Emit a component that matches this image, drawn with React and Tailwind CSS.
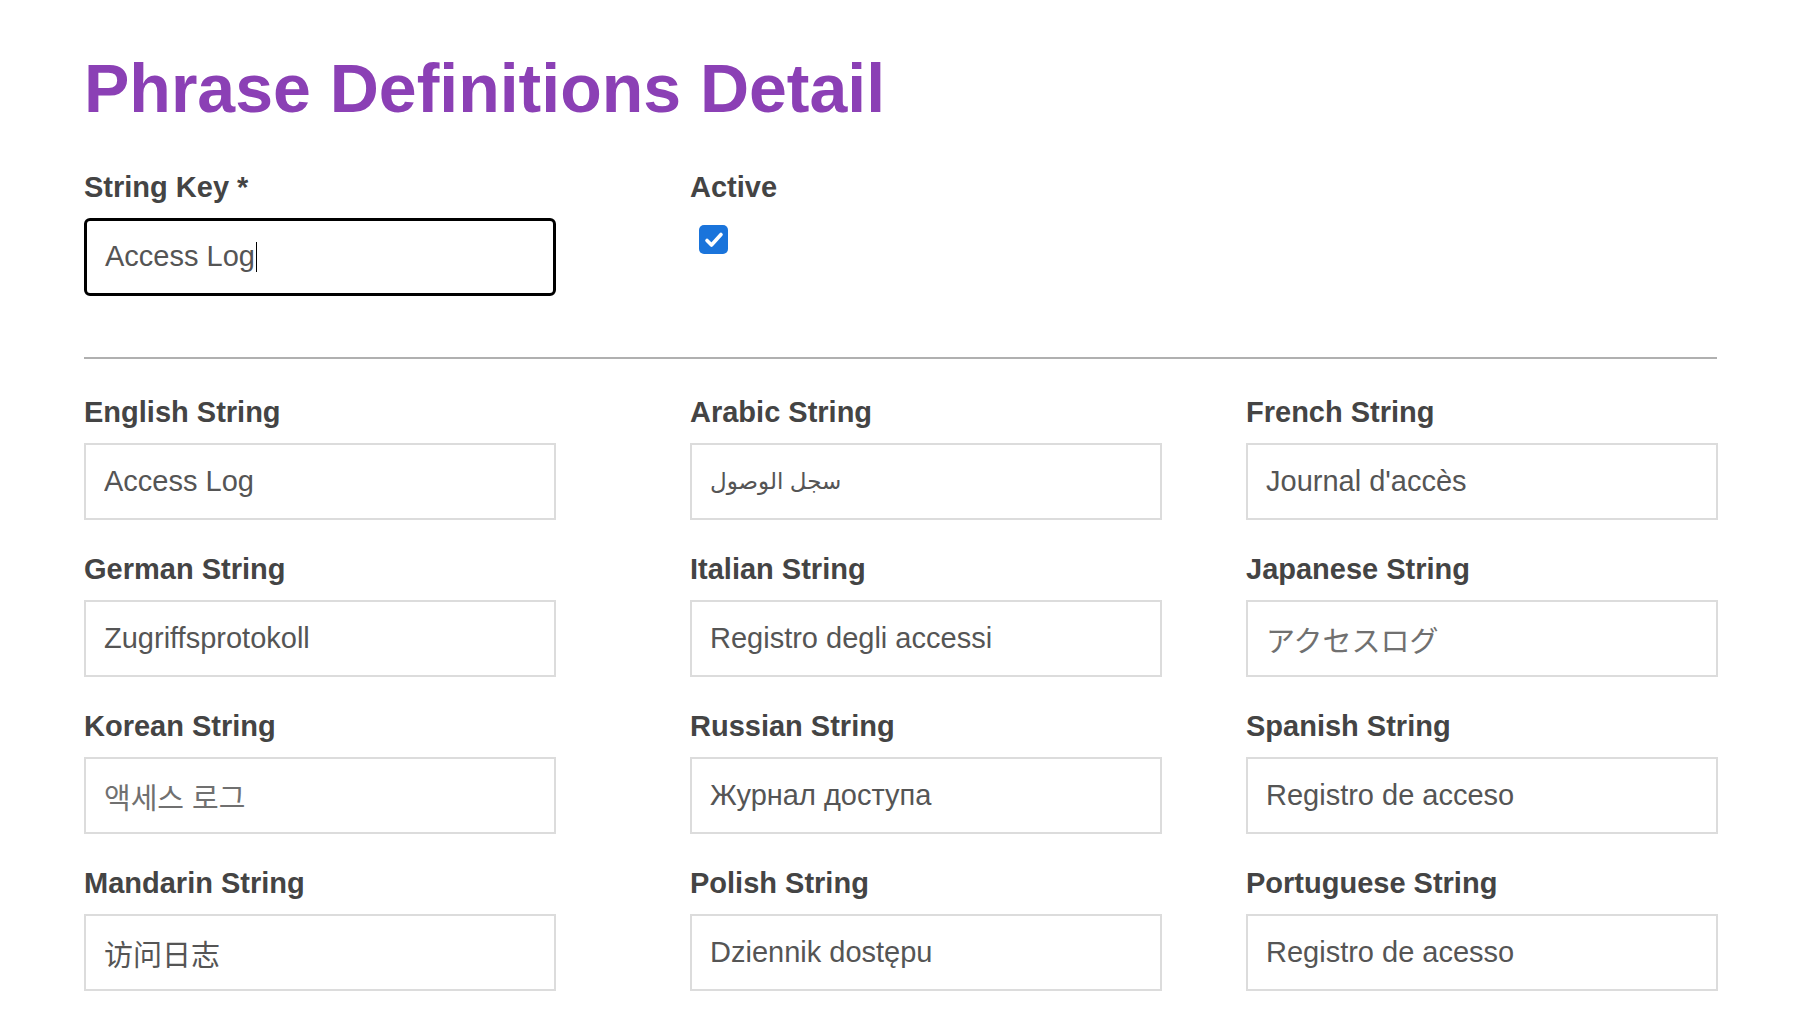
import { useState } from 'react';

const fields = [
    { label: "English String", value: "Access Log" },
    { label: "Arabic String", value: "سجل الوصول", size: "text-[23px]" },
    { label: "French String", value: "Journal d'accès" },
    { label: "German String", value: "Zugriffsprotokoll" },
    { label: "Italian String", value: "Registro degli accessi" },
    { label: "Japanese String", value: "アクセスログ", font: "font-['Liberation_Sans','Noto_Sans_CJK_JP',sans-serif]", color: "text-[#707070]" },
    { label: "Korean String", value: "액세스 로그", font: "font-['Liberation_Sans','Noto_Sans_CJK_KR',sans-serif]", color: "text-[#707070]" },
    { label: "Russian String", value: "Журнал доступа" },
    { label: "Spanish String", value: "Registro de acceso" },
    { label: "Mandarin String", value: "访问日志", font: "font-['Liberation_Sans','Noto_Sans_CJK_SC',sans-serif]" },
    { label: "Polish String", value: "Dziennik dostępu" },
    { label: "Portuguese String", value: "Registro de acesso" },
];

const Label = ({ children }) => (
    <label className="block text-[29px] leading-[34px] font-bold text-[#444]">{children}</label>
);

const App = () => {
    const [active, setActive] = useState(true);

    return (
        <div className="min-h-screen bg-white pl-[84px] pr-[83px] pt-[54px] font-['Liberation_Sans','DejaVu_Sans','Noto_Sans_CJK_SC',sans-serif]">
            <h1 className="text-[68px] leading-none font-bold text-[#8b40b5]">Phrase Definitions Detail</h1>

            <div className="mt-[48px] grid grid-cols-[606px_556px_472px]">
                <div>
                    <Label>String Key *</Label>
                    <div className="mt-[14px] flex h-[78px] w-[472px] items-center rounded-md border-[3px] border-black px-[18px] text-[29px] text-[#555]">
                        <span>Access Log</span>
                        <span className="ml-px h-[30px] w-px bg-black"></span>
                    </div>
                </div>
                <div>
                    <Label>Active</Label>
                    <button
                        type="button"
                        onClick={() => setActive(!active)}
                        className={`mt-[21px] ml-[9px] flex h-[29px] w-[29px] items-center justify-center rounded-[5px] ${active ? 'bg-[#1a74db]' : 'border-2 border-[#777] bg-white'}`}
                    >
                        {active && (
                            <svg className="h-[24px] w-[24px]" viewBox="0 0 24 24" fill="none" stroke="white" strokeWidth="3.6" strokeLinecap="round" strokeLinejoin="round">
                                <path d="M5 12.5l4.5 4.5L19 6.5" />
                            </svg>
                        )}
                    </button>
                </div>
            </div>

            <div className="mt-[61px] h-[2px] bg-[#b0b0b0]"></div>

            <div className="mt-[36px] grid grid-cols-[606px_556px_472px] gap-y-[32px]">
                {fields.map((field, index) => (
                    <div key={index}>
                        <Label>{field.label}</Label>
                        <input
                            type="text"
                            defaultValue={field.value}
                            className={`mt-[14px] block h-[77px] w-[472px] border-2 border-[#dcdcdc] bg-white px-[18px] outline-none ${field.size || 'text-[29px]'} ${field.color || 'text-[#555]'} ${field.font || ''}`}
                        />
                    </div>
                ))}
            </div>
        </div>
    );
};

export default App;
